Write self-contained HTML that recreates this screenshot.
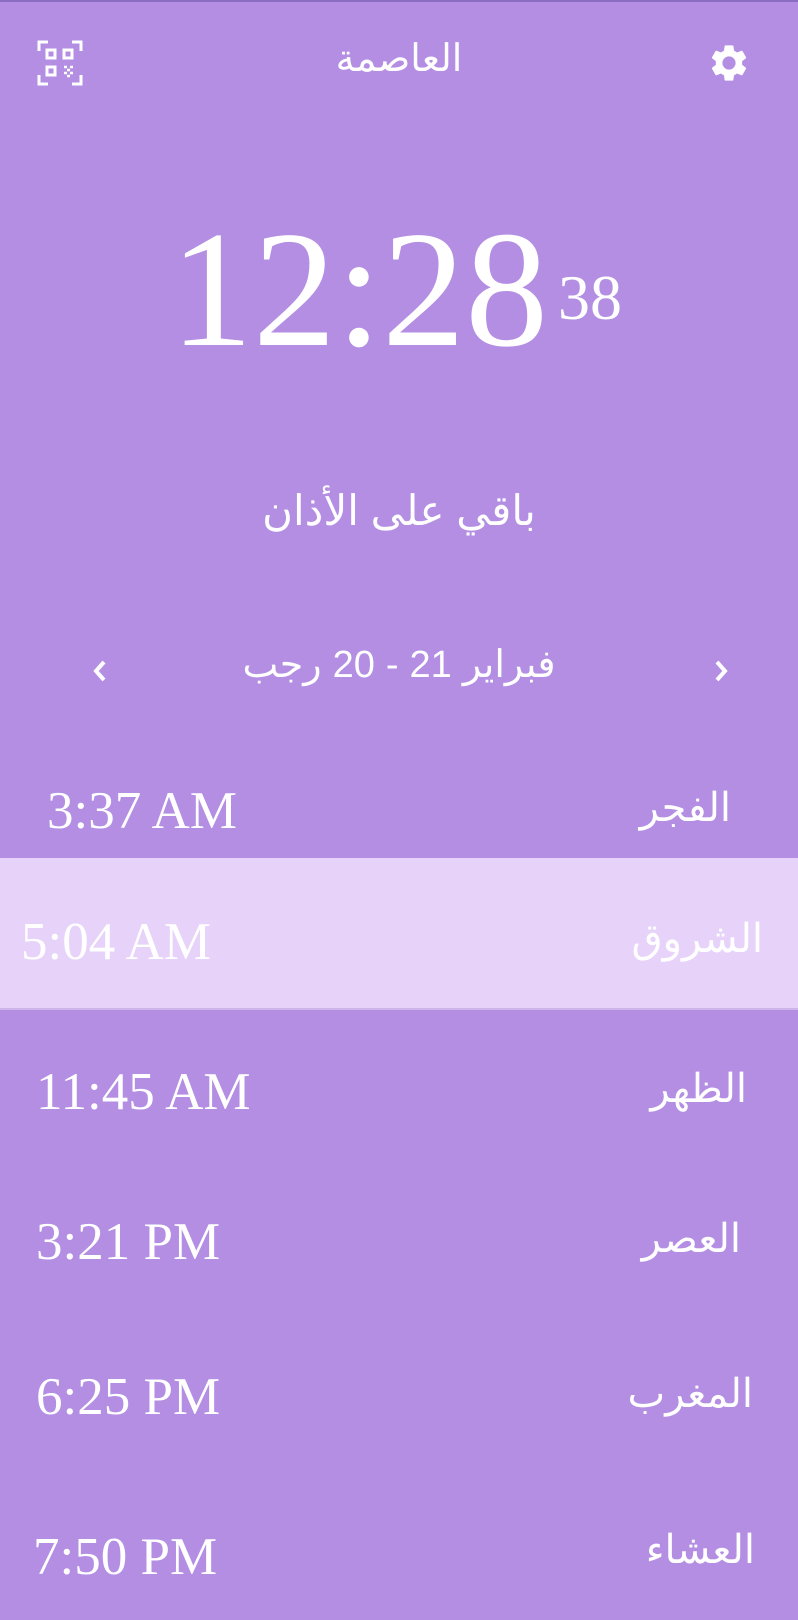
<!DOCTYPE html>
<html><head><meta charset="utf-8"><style>
body{margin:0;width:798px;height:1620px;background:#b38ee3;position:relative;overflow:hidden;color:#fff;font-family:"Liberation Sans","Noto Sans CJK SC",sans-serif}
.a{position:absolute;white-space:nowrap}
.t{font-family:"Liberation Serif",serif;font-size:53px;line-height:1}
.ar{font-size:40px;line-height:1;direction:rtl}
.d{display:flex;justify-content:center;gap:11px;direction:ltr}
.d span{display:inline-block}
</style></head><body>
<div class="a" style="top:0;left:0;width:798px;height:2px;background:#8c6cc0"></div>
<svg class="a" style="left:37px;top:40px" width="46" height="46" viewBox="0 0 46 46" fill="none" stroke="#fff" stroke-width="3">
<path d="M2 11V2h9M35 2h9v9M2 35v9h9M35 44h9v-9"/>
<rect x="10" y="10" width="8" height="8"/><rect x="27" y="10" width="8" height="8"/><rect x="10" y="27" width="8" height="8"/>
<path d="M27 27h3M33 27h3M30 30h3M27 33h3M33 33h3M30 36h3" stroke-width="2.5"/></svg>
<div class="a ar" style="left:0;width:798px;text-align:center;top:40px;font-size:38px">العاصمة</div>
<svg class="a" style="left:707px;top:41px" width="44" height="44" viewBox="0 0 24 24"><path fill="#fff" d="M19.14 12.94c.04-.3.06-.61.06-.94 0-.32-.02-.64-.07-.94l2.030-1.58a.49.49 0 00.12-.61l-1.92-3.32a.488.488 0 00-.59-.22l-2.39.96c-.5-.38-1.03-.7-1.62-.94l-.36-2.54a.484.484 0 00-.48-.41h-3.84c-.24 0-.43.17-.47.41l-.36 2.54c-.59.24-1.13.57-1.62.94l-2.39-.96c-.22-.08-.47 0-.59.22L2.74 8.87c-.12.21-.08.47.12.61l2.03 1.580c-.05.3-.09.63-.09.94s.02.64.07.94l-2.03 1.58a.49.49 0 00-.12.61l1.92 3.32c.12.22.37.29.59.22l2.39-.96c.5.38 1.03.7 1.62.94l.36 2.54c.05.24.24.41.48.41h3.84c.24 0 .44-.17.47-.41l.36-2.54c.59-.24 1.130-.56 1.62-.94l2.39.96c.22.08.47 0 .59-.22l1.92-3.32c.12-.22.07-.47-.12-.61l-2.01-1.58zM12 15.6c-1.98 0-3.6-1.62-3.6-3.6s1.62-3.6 3.6-3.6 3.6 1.620 3.6 3.6-1.62 3.6-3.6 3.6z"/></svg>
<div class="a" style="left:170px;top:206px;font-family:'Liberation Serif',serif;font-size:166px;line-height:1">12:28</div>
<div class="a" style="left:558px;top:266px;font-family:'Liberation Serif',serif;font-size:64px;line-height:1">38</div>
<div class="a ar" style="left:0;width:798px;text-align:center;top:490px;font-size:42px">باقي على الأذان</div>
<svg class="a" style="left:91px;top:658px" width="18" height="26" viewBox="0 0 18 26"><path d="M13 4L5 13l8 9" fill="none" stroke="#fff" stroke-width="4"/></svg>
<svg class="a" style="left:712px;top:658px" width="18" height="26" viewBox="0 0 18 26"><path d="M5 4l8 9-8 9" fill="none" stroke="#fff" stroke-width="4"/></svg>
<div class="a d" style="left:0;width:798px;top:646px;font-size:38px;line-height:1"><span>رجب</span><span>20</span><span>-</span><span>21</span><span>فبراير</span></div>
<div class="a" style="left:0;top:858px;width:798px;height:150px;background:#e7d3fa;border-bottom:2px solid #cdb4ea"></div>
<div class="a t" style="left:47px;top:785px">3:37 AM</div><div class="a ar" style="right:67px;top:788px">الفجر</div>
<div class="a t" style="left:21px;top:916px">5:04 AM</div><div class="a ar" style="right:35px;top:919px">الشروق</div>
<div class="a t" style="left:36px;top:1066px">11:45 AM</div><div class="a ar" style="right:51px;top:1069px">الظهر</div>
<div class="a t" style="left:36px;top:1216px">3:21 PM</div><div class="a ar" style="right:57px;top:1219px">العصر</div>
<div class="a t" style="left:36px;top:1371px">6:25 PM</div><div class="a ar" style="right:45px;top:1374px">المغرب</div>
<div class="a t" style="left:33px;top:1531px">7:50 PM</div><div class="a ar" style="right:43px;top:1530px">العشاء</div>
</body></html>
